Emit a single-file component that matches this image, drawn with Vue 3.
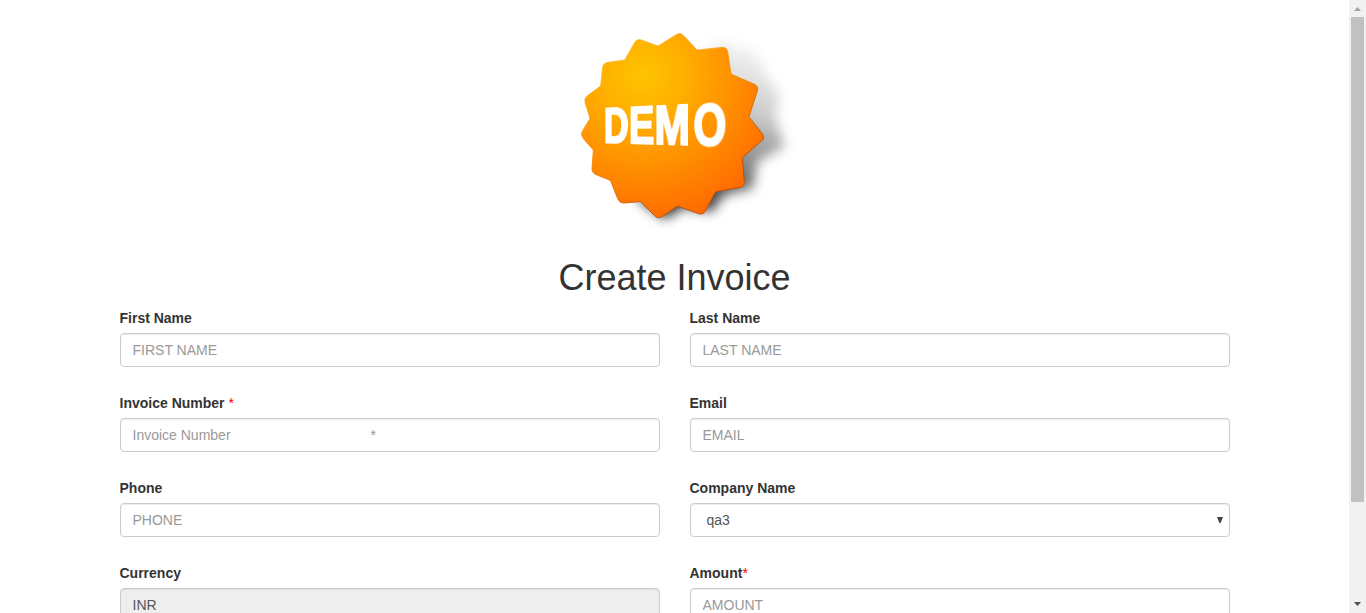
<script setup>
const sp = '\u00a0'.repeat(36)
const fields = [
  { id: 'first', label: 'First Name', placeholder: 'FIRST NAME' },
  { id: 'last', label: 'Last Name', placeholder: 'LAST NAME' },
  { id: 'number', label: 'Invoice Number ', required: true, placeholder: 'Invoice Number' + sp + '*' },
  { id: 'email', label: 'Email', placeholder: 'EMAIL' },
  { id: 'phone', label: 'Phone', placeholder: 'PHONE' },
  { id: 'company', label: 'Company Name', options: ['qa3'] },
  { id: 'currency', label: 'Currency', value: 'INR', readonly: true },
  { id: 'amount', label: 'Amount', required: true, placeholder: 'AMOUNT' },
]

// Badge outline: tips and valleys alternate, starting with a tip.
const star = [
  [331, 36], [381, 90], [471, 81], [483, 162], [567, 199], [537, 290], [586, 353],
  [517, 413], [524, 500], [437, 515], [399, 586], [322, 558], [265, 598], [212, 545],
  [149, 550], [121, 481], [65, 459], [70, 390], [30, 345], [60, 295], [41, 235],
  [92, 198], [99, 129], [164, 120], [201, 55], [264, 78],
]
const toward = (a, b, d) => {
  const l = Math.hypot(b[0] - a[0], b[1] - a[1])
  return [a[0] + ((b[0] - a[0]) * d) / l, a[1] + ((b[1] - a[1]) * d) / l].join(' ')
}
const starPath = star.map((p, i) => {
  const prev = star[(i + star.length - 1) % star.length]
  const next = star[(i + 1) % star.length]
  const r = i % 2 ? 3 : 15
  return `${i ? 'L' : 'M'}${toward(p, prev, r)} Q${p.join(' ')} ${toward(p, next, r)}`
}).join(' ') + 'Z'
</script>

<template>
  <div class="window">
    <main class="page">
      <div class="container">
        <div class="logo">
          <svg width="230" height="215" viewBox="0 0 690 645" aria-hidden="true">
            <defs>
              <radialGradient id="face" gradientUnits="userSpaceOnUse" cx="215" cy="165" r="450">
                <stop offset="0" stop-color="#ffc400" />
                <stop offset=".3" stop-color="#ffae00" />
                <stop offset=".65" stop-color="#ff8c00" />
                <stop offset="1" stop-color="#ff6900" />
              </radialGradient>
              <linearGradient id="shade" gradientUnits="userSpaceOnUse" x1="590" y1="90" x2="430" y2="580">
                <stop offset="0" stop-color="#000" stop-opacity=".03" />
                <stop offset=".35" stop-color="#000" stop-opacity=".19" />
                <stop offset=".65" stop-color="#000" stop-opacity=".45" />
                <stop offset="1" stop-color="#000" stop-opacity=".8" />
              </linearGradient>
              <linearGradient id="rim" x1=".2" y1="0" x2=".8" y2="1">
                <stop offset="0" stop-color="#ffc64a" />
                <stop offset=".45" stop-color="#f58a00" />
                <stop offset=".75" stop-color="#b64c00" />
                <stop offset="1" stop-color="#b94500" />
              </linearGradient>
              <filter id="soft" x="-20%" y="-20%" width="140%" height="140%">
                <feGaussianBlur stdDeviation="17" />
              </filter>
            </defs>
            <path
              d="M440 60L560 95L595 180L630 220L615 290L645 380L562 425L548 505L462 525L425 575L340 562L285 598L205 540L300 300Z"
              fill="url(#shade)" filter="url(#soft)" />
            <path :d="starPath" fill="url(#face)" stroke="url(#rim)" stroke-width="2.5" />
          </svg>
          <span class="demo">DEM<span class="last">O</span></span>
        </div>
        <h1>Create Invoice</h1>
        <form class="grid" @submit.prevent>
          <div v-for="f in fields" :key="f.id" class="field">
            <label :for="f.id">{{ f.label }}<span v-if="f.required" class="required">*</span></label>
            <div v-if="f.options" class="select">
              <select :id="f.id" class="control">
                <option v-for="o in f.options" :key="o">{{ o }}</option>
              </select>
              <svg class="caret" width="6" height="6" viewBox="0 0 6 6"><path d="M0 0H6L3.6 6H2.4Z" fill="#444" /></svg>
            </div>
            <input v-else :id="f.id" class="control" :placeholder="f.placeholder" :value="f.value" :readonly="f.readonly" />
          </div>
        </form>
      </div>
    </main>
    <aside class="scrollbar">
      <svg width="17" height="17" viewBox="0 0 17 17"><path d="M5 11L8.5 7L12 11Z" fill="#a3a3a3" /></svg>
      <div class="thumb"></div>
      <svg class="down" width="17" height="17" viewBox="0 0 17 17"><path d="M5 6H12L8.5 10Z" fill="#505050" /></svg>
    </aside>
  </div>
</template>

<style>
body { margin: 0; overflow: hidden; background: #fff; }
</style>

<style scoped>
* { box-sizing: border-box; }
.window { display: flex; height: 613px; overflow: hidden; color: #333; font: 14px/20px "Liberation Sans", Arial, sans-serif; }
.page { flex: 1; min-width: 0; }
.container { width: 1110px; margin: 0 auto; padding-top: 20px; }
.logo { position: relative; width: 230px; height: 215px; margin-left: 450.5px; }
.logo svg { display: block; }
.demo {
  position: absolute; left: 34px; top: 75.7px; height: 60px;
  color: #fff; font-weight: bold; font-size: 53px; line-height: 60px; white-space: nowrap;
  -webkit-text-stroke: 2.2px #fff;
  letter-spacing: .3px;
  transform-origin: 0 50%;
  transform: matrix3d(.615, -.005, 0, -.0013, 0, .915, 0, 0, 0, 0, 1, 0, 0, 0, 0, 1);
}
.last { display: inline-block; transform: translateX(-2px) scaleX(.87); transform-origin: 98% 50%; }
h1 { margin: 23px 0 10px; text-align: center; font-size: 36px; font-weight: 400; line-height: 40px; }
.grid { display: grid; grid-template-columns: 540px 540px; gap: 26px 30px; }
.field { height: 59px; }
label { display: block; height: 20px; margin-bottom: 5px; font-weight: bold; white-space: pre; }
.required { color: #f00; font-weight: 400; }
.control {
  display: block; width: 100%; height: 34px; margin: 0; padding: 6px 12px;
  border: 1px solid #ccc; border-radius: 4px; outline: 0; background: #fff;
  box-shadow: inset 0 1px 1px rgba(0, 0, 0, .075);
  color: #555; font: inherit; appearance: none;
}
.control::placeholder { color: #999; opacity: 1; }
.control[readonly] { background: #eee; }
.select { position: relative; }
select.control { padding-left: 16px; }
.caret { position: absolute; right: 7px; top: 14px; }
.scrollbar { display: flex; flex-direction: column; width: 17px; background: #f1f1f1; }
.scrollbar svg { display: block; flex: none; }
.thumb { width: 13px; height: 485px; margin-left: 2px; background: #c1c1c1; }
.down { margin-top: auto; }
</style>
